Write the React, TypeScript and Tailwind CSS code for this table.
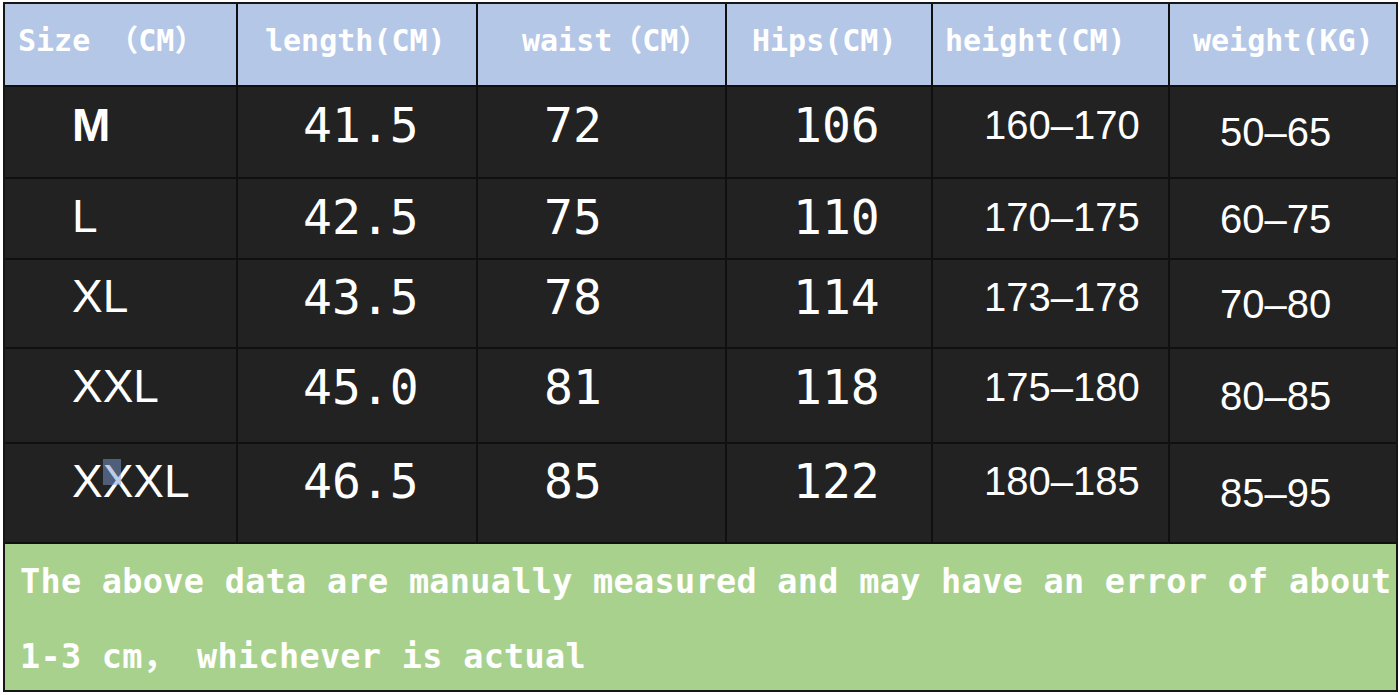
const headers = [
    { label: 'Size （CM）', pad: 'pl-[13px]' },
    { label: 'length(CM)', pad: 'pl-[27px]' },
    { label: 'waist（CM）', pad: 'pl-[44px]' },
    { label: 'Hips(CM)', pad: 'pl-[25px]' },
    { label: 'height(CM)', pad: 'pl-[12px]' },
    { label: 'weight(KG)', pad: 'pl-[23px]' },
];

const rows = [
    { size: 'M', length: '41.5', waist: '72', hips: '106', height: '160–170', weight: '50–65', lift: 'pb-[14px]', bold: true },
    { size: 'L', length: '42.5', waist: '75', hips: '110', height: '170–175', weight: '60–75', lift: 'pb-[4px]', bold: false },
    { size: 'XL', length: '43.5', waist: '78', hips: '114', height: '173–178', weight: '70–80', lift: 'pb-[14px]', bold: false },
    { size: 'XXL', length: '45.0', waist: '81', hips: '118', height: '175–180', weight: '80–85', lift: 'pb-[18px]', bold: false },
    { size: 'XXXL', length: '46.5', waist: '85', hips: '122', height: '180–185', weight: '85–95', lift: 'pb-[24px]', bold: false },
];

const mono = "font-['DejaVu_Sans_Mono','Noto_Sans_CJK_SC',monospace]";
const sans = "font-['Liberation_Sans',Arial,sans-serif]";

export default function App() {
    return (
        <div className="w-[1400px] h-[695px] bg-white pl-[3px] pt-[2px]">
            <div className="w-[1395px] grid grid-cols-[231px_238px_247px_204px_235px_226px] grid-rows-[81px_90px_79px_87px_93px_98px_146px] gap-[2px] border-2 border-[#161616] bg-[#101010]">
                {headers.map((h) => (
                    <div key={h.label} className={`flex items-center bg-[#b4c7e7] pb-[9px] text-white text-[30px] font-bold whitespace-pre ${mono} ${h.pad}`}>
                        {h.label}
                    </div>
                ))}

                {rows.map((r) => (
                    <div key={r.size} className="contents">
                        <div className={`flex items-center bg-[#222222] pl-[67px] text-white text-[46px] ${r.bold ? 'font-bold' : 'font-normal'} ${sans} ${r.lift}`}>
                            {r.size === 'XXXL' ? (
                                <span className="relative">
                                    XXXL
                                    <span className="absolute left-[31px] top-[12px] w-[18px] h-[26px] bg-[#7d9bd0]/50"></span>
                                </span>
                            ) : (
                                r.size
                            )}
                        </div>
                        <div className={`flex items-center bg-[#222222] pl-[65px] text-white text-[48px] ${mono} ${r.lift}`}>{r.length}</div>
                        <div className={`flex items-center bg-[#222222] pl-[66px] text-white text-[48px] ${mono} ${r.lift}`}>{r.waist}</div>
                        <div className={`flex items-center bg-[#222222] pl-[66px] text-white text-[48px] ${mono} ${r.lift}`}>{r.hips}</div>
                        <div className={`flex items-center bg-[#222222] pl-[51px] text-white text-[40px] ${sans} ${r.lift}`}>{r.height}</div>
                        <div className={`flex items-center bg-[#222222] pl-[50px] text-white text-[40px] ${sans}`}>{r.weight}</div>
                    </div>
                ))}

                <div className={`col-span-6 bg-[#a9d18e] pl-[15px] text-white text-[33.5px] font-bold tracking-[0.3px] leading-[75px] whitespace-nowrap ${mono}`}>
                    The above data are manually measured and may have an error of about
                    <br />
                    1-3 cm， whichever is actual
                </div>
            </div>
        </div>
    );
}
